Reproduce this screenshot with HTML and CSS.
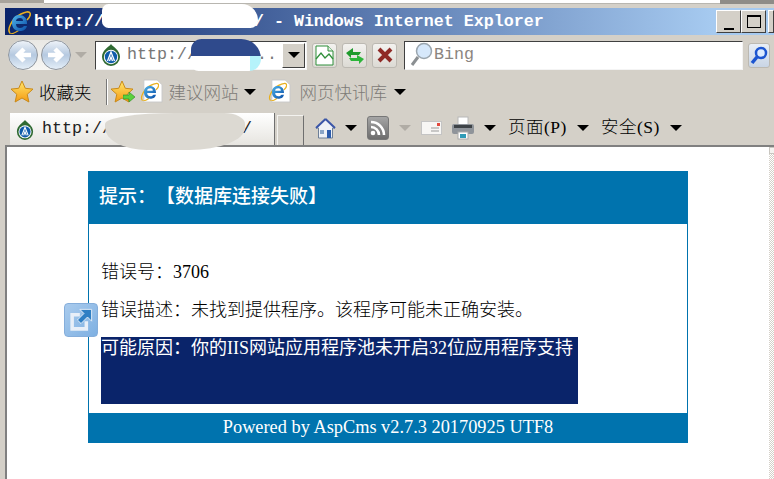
FILE: index.html
```html
<!DOCTYPE html>
<html lang="zh-CN">
<head>
<meta charset="utf-8">
<title>Windows Internet Explorer</title>
<link rel="stylesheet" href="styles.css">
</head>
<body>
<svg class="defs" width="0" height="0" aria-hidden="true">
  <defs>
    <linearGradient id="ie" x1="0" y1="0" x2="1" y2="1"><stop offset="0" stop-color="#4fb4ea"/><stop offset="1" stop-color="#0b4fa8"/></linearGradient>
    <linearGradient id="gold" x1="0" y1="0" x2="0" y2="1"><stop offset="0" stop-color="#ffe66b"/><stop offset="1" stop-color="#f59a12"/></linearGradient>
    <symbol id="e" viewBox="0 0 24 24">
      <path d="M3 23C0 20 4 9 14 4c4-2 8-3 9-1 1 2-1 5-3 7" fill="none" stroke="#e8b020" stroke-width="1.600"/>
      <path d="M2.500 23.500c2 1 6-1 9-3" fill="none" stroke="#e8b020" stroke-width="1.300"/>
      <path d="M12 5c5 0 8 3 8 8v1H9c0 3 2 4 4 4 2 0 3-1 4-2h3c-1 4-4 5-7 5-5 0-8-3-8-8s3-8 7-8zm-3 6h7c0-2-1-3-3-3s-4 1-4 3z" fill="url(#ie)"/>
    </symbol>
    <symbol id="page-e" viewBox="0 0 24 26">
      <path d="M4 1h14l5 5v18H4z" fill="#fff" stroke="#c8c8c8"/>
      <use href="#e" x="0" y="3" width="20" height="20"/>
    </symbol>
    <symbol id="site" viewBox="0 0 20 24">
      <path d="M10 1c2 3 9 6 9 13a9 9 0 0 1-18 0C1 7 8 4 10 1z" fill="#2f6a32"/>
      <circle cx="10" cy="14" r="7.200" fill="#fff"/>
      <circle cx="10" cy="14" r="6.200" fill="#0f5cab"/>
      <path d="M6.500 18 10 9l3.500 9M8.500 18l1.500-4 1.500 4" fill="none" stroke="#fff" stroke-width="1.300"/>
    </symbol>
    <symbol id="star" viewBox="0 0 24 24">
      <path d="M12 1l3.300 7.300 7.700.8-5.800 5.200 1.700 7.700L12 18l-6.900 4 1.700-7.700L1 9.100l7.700-.8z" fill="url(#gold)" stroke="#c98a1a"/>
    </symbol>
  </defs>
</svg>

<div class="screen">
  <div class="topstrip"><span class="strip-a"></span><span class="strip-b"></span><span class="strip-c"></span></div>

  <header class="titlebar">
    <svg class="title-e" width="24" height="24"><use href="#e"/></svg>
    <span class="title-text">http://               / - Windows Internet Explorer</span>
    <div class="winbtns">
      <span class="winbtn"><i class="glyph-min"></i></span>
      <span class="winbtn"><i class="glyph-max"></i></span>
      <span class="winbtn"></span>
    </div>
  </header>

  <div class="addressbar">
    <div class="nav">
      <div class="orbs">
        <span class="orb"><svg width="24" height="24" viewBox="0 0 24 24"><path d="M20 12H8M13 6l-6 6 6 6" fill="none" stroke="#fff" stroke-width="4.500"/></svg></span>
        <span class="orb"><svg width="24" height="24" viewBox="0 0 24 24"><path d="M4 12h12M11 6l6 6-6 6" fill="none" stroke="#fff" stroke-width="4.500"/></svg></span>
      </div>
      <i class="caret caret-dim nav-caret"></i>
    </div>
    <div class="address">
      <svg class="site-icon" width="20" height="24"><use href="#site"/></svg>
      <span class="addr-text">http://      ..</span>
      <span class="dropbtn"><i class="caret"></i></span>
    </div>
    <span class="toolbtn"><svg width="19" height="21" viewBox="0 0 19 21"><path d="M1 1h12l5 5v14H1z" fill="#fff" stroke="#2f8f3a"/><path d="M13 1v5h5" fill="#e4efe4" stroke="#2f8f3a"/><path d="M1 14l5-6 4 5 4-4 4 5" fill="none" stroke="#2f8f3a" stroke-width="1.300"/></svg></span>
    <span class="toolbtn"><svg width="20" height="18" viewBox="0 0 20 18"><path d="M16 6H8V2L1 7l5 5V9h8z" fill="#1e9a2c"/><path d="M4 12h8V9l7 4-5 5v-3H6z" fill="#2cb53a"/></svg></span>
    <span class="toolbtn"><svg width="16" height="16" viewBox="0 0 16 16"><path d="M2 2l12 12M14 2 2 14" stroke="#8f2a26" stroke-width="4"/></svg></span>
    <div class="search">
      <svg width="24" height="26" viewBox="0 0 24 26"><circle cx="14" cy="9" r="7.500" fill="#d6e8fb" stroke="#9aa5ae" stroke-width="1.500"/><path d="M8 15 2 23" stroke="#8b8f92" stroke-width="3"/></svg>
      <span class="search-text">Bing</span>
    </div>
    <span class="toolbtn search-go"><svg width="18" height="20" viewBox="0 0 18 20"><circle cx="11" cy="8" r="5" fill="#dcebff" stroke="#1c55d0" stroke-width="2.500"/><path d="M7 12 2 18" stroke="#1c55d0" stroke-width="3.500"/></svg></span>
  </div>

  <nav class="favbar">
    <svg class="fav-star" width="24" height="24"><use href="#star"/></svg>
    <span class="fav-label">收藏夹</span>
    <i class="vsep"></i>
    <span class="fav-add"><svg width="24" height="24"><use href="#star"/></svg><svg class="fav-arrow" width="12" height="10" viewBox="0 0 12 10"><path d="M0 3h6V0l6 5-6 5V7H0z" fill="#5bd13c" stroke="#2a8a22" stroke-width=".6"/></svg></span>
    <svg class="fav-page" width="23" height="25"><use href="#page-e"/></svg>
    <span class="fav-link link-a">建议网站</span>
    <i class="caret caret-a"></i>
    <svg class="fav-page page-b" width="23" height="25"><use href="#page-e"/></svg>
    <span class="fav-link link-b">网页快讯库</span>
    <i class="caret caret-b"></i>
  </nav>

  <div class="tabbar">
    <div class="tab">
      <svg width="18" height="22"><use href="#site"/></svg>
      <span class="tab-text">http://             /</span>
    </div>
    <span class="newtab"></span>
    <svg class="cmd-home" width="21" height="24" viewBox="0 0 21 24"><path d="M10.500 3 1 12h2.500v10h14V12H20z" fill="#eef1f6" stroke="#6d7f97"/><path d="M10.500 3 1 12M10.500 3 20 12" stroke="#3a55a8" stroke-width="2"/><rect x="12" y="14" width="4" height="8" fill="#2d5cab"/><rect x="5" y="14" width="4" height="4" fill="#8aa5c6"/></svg>
    <i class="caret caret-home"></i>
    <span class="rss"><svg width="18" height="18" viewBox="0 0 18 18"><circle cx="4" cy="14" r="2.300" fill="#fff"/><path d="M2 8a8 8 0 0 1 8 8M2 3a13 13 0 0 1 13 13" fill="none" stroke="#fff" stroke-width="2.600"/></svg></span>
    <i class="caret caret-dim caret-rss"></i>
    <svg class="cmd-mail" width="21" height="14" viewBox="0 0 21 14"><rect x=".5" y=".5" width="20" height="13" fill="#f7f6f4" stroke="#c4c4c4"/><path d="M10 7h8M10 10h8" stroke="#999"/><rect x="16" y="2" width="3" height="3" fill="#e24a3f"/></svg>
    <svg class="cmd-print" width="24" height="24" viewBox="0 0 24 24"><rect x="7" y="1" width="10" height="8" fill="#fff" stroke="#b8b8b8"/><rect x="1" y="8" width="22" height="10" rx="2" fill="#8f949a"/><rect x="3" y="9" width="18" height="3" fill="#3e4347"/><rect x="7" y="16" width="10" height="7" fill="#fff" stroke="#aaa"/><rect x="9" y="18" width="6" height="4" fill="#2f9bb7"/></svg>
    <i class="caret caret-print"></i>
    <span class="cmd-label label-page">页面(P)</span>
    <i class="caret caret-page"></i>
    <span class="cmd-label label-safe">安全(S)</span>
    <i class="caret caret-safe"></i>
  </div>

  <main class="viewport">
    <div class="page">
      <section class="card">
        <h1 class="card-head">提示：【数据库连接失败】</h1>
        <div class="card-body">
          <p class="line">错误号：3706</p>
          <p class="line">错误描述：未找到提供程序。该程序可能未正确安装。</p>
          <p class="selected">可能原因：你的IIS网站应用程序池未开启32位应用程序支持</p>
        </div>
        <footer class="card-foot">Powered by AspCms v2.7.3 20170925 UTF8</footer>
      </section>
    </div>
    <div class="scrolltrack"><span class="scrollcap"></span></div>
  </main>

  <span class="blob blob-title"></span>
  <span class="blob blob-addr"></span>
  <span class="blob blob-tab"></span>
  <span class="float-icon"><svg width="26" height="26" viewBox="0 0 22 22"><path d="M2 5h8v3H5v9h9v-5h3v8H2z" fill="#e8eff8"/><path d="M10 2h10v10l-3.500-3.500L11 14l-3-3 5.500-5.500z" fill="#2f7fc4" stroke="#e8eff8" stroke-width=".8"/></svg></span>
</div>
</body>
</html>
```

FILE: styles.css
```css
* { box-sizing: border-box; }
html, body { margin: 0; padding: 0; }
body { background: #d4d0c8; overflow: hidden; font-family: "Liberation Serif", "Noto Sans CJK SC", serif; text-spacing-trim: space-all; }
.defs { position: absolute; }
i { display: block; font-style: normal; }
svg { display: block; flex: none; }

.screen { position: relative; width: 774px; height: 479px; overflow: hidden; background: #d4d0c8; display: flex; flex-direction: column; }

.topstrip { height: 8px; display: flex; flex: none; }
.strip-a { width: 44px; height: 3px; background: #a8a49c; }
.strip-b { flex: 1; height: 4px; background: #fff; border-bottom: 1px solid #b8b6b0; }
.strip-c { width: 54px; height: 4px; background: #8e8c88; }

.titlebar { height: 27px; margin-left: 5px; flex: none; display: flex; align-items: center; background: linear-gradient(90deg, #0a246a 0%, #a6caf0 92%); color: #fff; }
.title-e { margin-left: 2px; }
.title-text { margin-left: 3px; font: bold 16.67px/27px "Liberation Mono", monospace; white-space: pre; }
.winbtns { margin-left: auto; display: flex; align-self: flex-start; margin-top: 2px; }
.winbtn { width: 25px; height: 23px; background: #d4d0c8; border: 1px solid; border-color: #fff #404040 #404040 #fff; display: flex; align-items: center; justify-content: center; }
.winbtn:last-child { width: 6px; margin-left: 2px; }
.glyph-min { width: 10px; height: 2px; background: #000; margin-top: 14px; }
.glyph-max { width: 14px; height: 13px; border: 1px solid #000; border-top-width: 2px; }

.addressbar { height: 40px; flex: none; display: flex; align-items: center; }
.nav { width: 95px; display: flex; align-items: center; padding-left: 8px; height: 32px; }
.orbs { display: flex; width: 63px; height: 30px; justify-content: space-between; background: linear-gradient(#e9e8e4, #f7f6f3); border-radius: 15px; }
.orb { width: 30px; height: 30px; border-radius: 50%; background: linear-gradient(#eef3f9, #b5c9e0 50%, #e4eef8); border: 1px solid #8f959c; display: flex; align-items: center; justify-content: center; }
.caret { width: 0; height: 0; border-style: solid; border-width: 6px 6px 0; border-color: #000 transparent transparent; flex: none; }
.caret-dim { border-top-color: #b0aca5; }
.nav-caret { margin-left: 4px; }

.address { width: 212px; height: 29px; background: #fff; border: 1px solid; border-color: #404040 #f4f4f4 #f4f4f4 #404040; display: flex; align-items: center; padding-left: 5px; }
.addr-text { margin-left: 6px; font: 16.67px/1 "Liberation Mono", monospace; color: #777; white-space: pre; flex: 1; min-width: 0; }
.dropbtn { width: 23px; height: 25px; background: #d4d0c8; border: 1px solid; border-color: #fff #404040 #404040 #fff; display: flex; align-items: center; justify-content: center; margin-right: 1px; }

.toolbtn { width: 25px; height: 25px; margin-left: 5px; border: 1px solid #bcb9b2; border-radius: 3px; background: linear-gradient(#f3f2ef, #dcdad4); display: flex; align-items: center; justify-content: center; }
.search { width: 339px; height: 29px; margin-left: 7px; background: #fff; border: 1px solid; border-color: #404040 #f4f4f4 #f4f4f4 #404040; display: flex; align-items: center; padding-left: 5px; }
.search-text { font: 16.67px/1 "Liberation Mono", monospace; color: #8b8580; }
.search-go { width: 22px; background: linear-gradient(#e8eef6, #c9d5e5); }

.favbar { height: 35px; flex: none; display: flex; align-items: center; padding: 0 0 2px 10px; }
.fav-label { margin-left: 5px; font: 300 17.5px/1 "Noto Sans CJK SC", sans-serif; color: #000; }
.vsep { width: 1px; height: 26px; margin-left: 14px; background: #777; box-shadow: 1px 0 #fff; }
.fav-add { margin-left: 3px; position: relative; }
.fav-arrow { position: absolute; right: -1px; bottom: 2px; }
.fav-page { margin-left: 6px; }
.fav-link { font: 300 17.5px/1 "Noto Sans CJK SC", sans-serif; color: #7d7b77; margin-left: 6px; }
.caret-a { margin-left: 5px; }
.page-b { margin-left: 12px; }
.link-b { margin-left: 9px; }
.caret-b { margin-left: 7px; }

.tabbar { height: 36px; flex: none; display: flex; align-items: center; padding-left: 10px; }
.tab { width: 265px; height: 33px; align-self: flex-end; background: linear-gradient(#fff, #e6e4df); border-right: 1px solid #6f6f6f; display: flex; align-items: center; padding-left: 6px; }
.tab-text { margin-left: 8px; font: 16.67px/1 "Liberation Mono", monospace; color: #222; white-space: pre; }
.newtab { width: 27px; height: 31px; align-self: flex-end; margin-left: 2px; border: 1px solid #9a9892; border-bottom: 0; border-color: #f3f2ef #6f6f6f transparent #f3f2ef; }
.cmd-home { margin-left: 11px; }
.caret-home { margin-left: 9px; }
.rss { width: 22px; height: 24px; margin-left: 10px; border-radius: 3px; background: linear-gradient(#a5a5a5, #6d6d6d); border: 1px solid #777; display: flex; align-items: center; justify-content: center; }
.caret-rss { margin-left: 10px; }
.cmd-mail { margin-left: 10px; }
.cmd-print { margin-left: 9px; }
.caret-print { margin-left: 9px; }
.cmd-label { font: 300 17.5px/1 "Liberation Serif", "Noto Sans CJK SC", serif; color: #000; white-space: nowrap; width: 60px; letter-spacing: .5px; }
.label-page { margin-left: 12px; }
.caret-page { margin-left: 9px; }
.label-safe { margin-left: 12px; }
.caret-safe { margin-left: 9px; }

.viewport { flex: 1; margin: -1px 0 0 5px; background: #fff; border-left: 2px solid #808080; border-top: 2px solid #808080; display: flex; min-height: 0; }
.page { flex: 1; padding: 24px 0 0 81px; }
.scrolltrack { width: 5px; background: repeating-conic-gradient(#d4d0c8 0 25%, #fff 0 50%) 0 0 / 2px 2px; }
.scrollcap { display: block; height: 7px; background: #f4f3f0; border: 1px solid #c8c6c0; border-right: 0; }

.card { width: 600px; height: 272px; display: flex; flex-direction: column; }
.card-head { height: 53px; margin: 0; padding: 14px 0 0 11px; background: #0073ae; color: #fff; font: 500 19px/1.3 "Liberation Serif", "Noto Sans CJK SC", serif; flex: none; }
.card-body { flex: 1; border-left: 1px solid #0073ae; border-right: 1px solid #0073ae; padding: 37px 0 0 12px; font: 300 18px/23px "Liberation Serif", "Noto Sans CJK SC", serif; color: #000; }
.line { margin: 0; height: 38px; }
.selected { margin: 0; width: 477px; height: 67px; background: #0a246a; color: #fff; font-weight: 400; }
.card-foot { height: 30px; flex: none; background: #0073ae; color: #fff; text-align: center; font: 18.33px/28px "Liberation Serif", serif; }

.blob { position: absolute; display: block; }
.blob-title { left: 102px; top: 4px; width: 156px; height: 24px; background: #fff; border-radius: 12px 30px 14px 12px; }
.blob-addr { left: 191px; top: 39px; width: 70px; height: 32px; border-radius: 14px 26px 16px 10px; background: linear-gradient(#2f4a8c 0 54%, transparent 54%), linear-gradient(90deg, #fff 0 85%, #b5f3fb 85%); }
.blob-tab { left: 105px; top: 113px; width: 140px; height: 37px; background: #dcd9d2; border-radius: 50% 15% 40% 30% / 30% 30% 60% 60%; }
.float-icon { position: absolute; left: 64px; top: 303px; width: 34px; height: 34px; border-radius: 4px; background: linear-gradient(135deg, #a9cbed, #7eb0e2); border: 1px solid #85aedb; display: flex; align-items: center; justify-content: center; }
```
